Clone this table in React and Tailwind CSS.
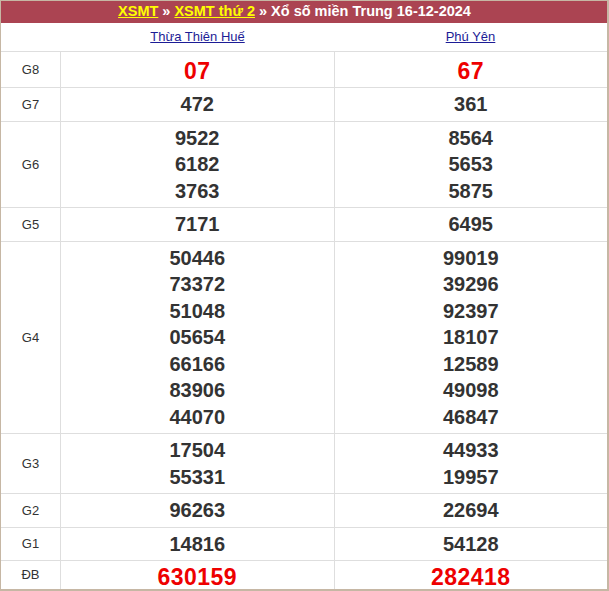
import React from 'react';

const rows = [
  { label: 'G8', a: ['07'], b: ['67'], red: true },
  { label: 'G7', a: ['472'], b: ['361'] },
  { label: 'G6', a: ['9522', '6182', '3763'], b: ['8564', '5653', '5875'] },
  { label: 'G5', a: ['7171'], b: ['6495'] },
  {
    label: 'G4',
    a: ['50446', '73372', '51048', '05654', '66166', '83906', '44070'],
    b: ['99019', '39296', '92397', '18107', '12589', '49098', '46847'],
  },
  { label: 'G3', a: ['17504', '55331'], b: ['44933', '19957'] },
  { label: 'G2', a: ['96263'], b: ['22694'] },
  { label: 'G1', a: ['14816'], b: ['54128'] },
  { label: 'ĐB', a: ['630159'], b: ['282418'], red: true, last: true },
];

const Numbers = ({ items, red }) => (
  <div className="flex flex-col items-center">
    {items.map((n, i) => (
      <span
        key={i}
        className={
          red
            ? 'text-[23px] leading-[29px] font-bold text-[#ee0000] tracking-[0.5px]'
            : 'text-[20px] leading-[26.5px] font-bold text-[#333333]'
        }
      >
        {n}
      </span>
    ))}
  </div>
);

export default function App() {
  return (
    <div className="w-[609px] h-[591px] overflow-hidden bg-white font-['Liberation_Sans',Arial,sans-serif] border-l border-t border-r-2 border-b-2 border-[#c6b7a4] flex flex-col">
      {/* Header */}
      <div className="h-[22px] shrink-0 bg-[#ab4452] flex items-center justify-center pr-[19px] text-[14.5px] font-bold text-white">
        <a className="text-[#ffff00] underline">XSMT</a>
        <span className="mx-[4px]">»</span>
        <a className="text-[#ffff00] underline">XSMT thứ 2</a>
        <span className="mx-[4px]">»</span>
        <span>Xổ số miền Trung 16-12-2024</span>
      </div>

      {/* Provinces */}
      <div className="flex h-[29px] shrink-0 border-b border-[#dedede] text-[13px]">
        <div className="w-[60px]" />
        <div className="flex-1 flex items-center justify-center">
          <a className="text-[#1c1c96] underline">Thừa Thiên Huế</a>
        </div>
        <div className="flex-1 flex items-center justify-center">
          <a className="text-[#1c1c96] underline">Phú Yên</a>
        </div>
      </div>

      {/* Results */}
      {rows.map((r) => (
        <div
          key={r.label}
          className={`flex ${r.last ? 'flex-1 min-h-0' : 'shrink-0 border-b border-[#dedede]'}`}
        >
          <div className="w-[60px] border-r border-[#dedede] flex items-center justify-center text-[13px] text-[#333333]">
            {r.label}
          </div>
          <div className={`flex-1 border-r border-[#dedede] flex items-center justify-center ${r.last ? 'pt-[4px]' : r.red ? 'pt-[5px] pb-[1px]' : 'py-[3px]'}`}>
            <Numbers items={r.a} red={r.red} />
          </div>
          <div className={`flex-1 flex items-center justify-center ${r.last ? 'pt-[4px]' : r.red ? 'pt-[5px] pb-[1px]' : 'py-[3px]'}`}>
            <Numbers items={r.b} red={r.red} />
          </div>
        </div>
      ))}
    </div>
  );
}
